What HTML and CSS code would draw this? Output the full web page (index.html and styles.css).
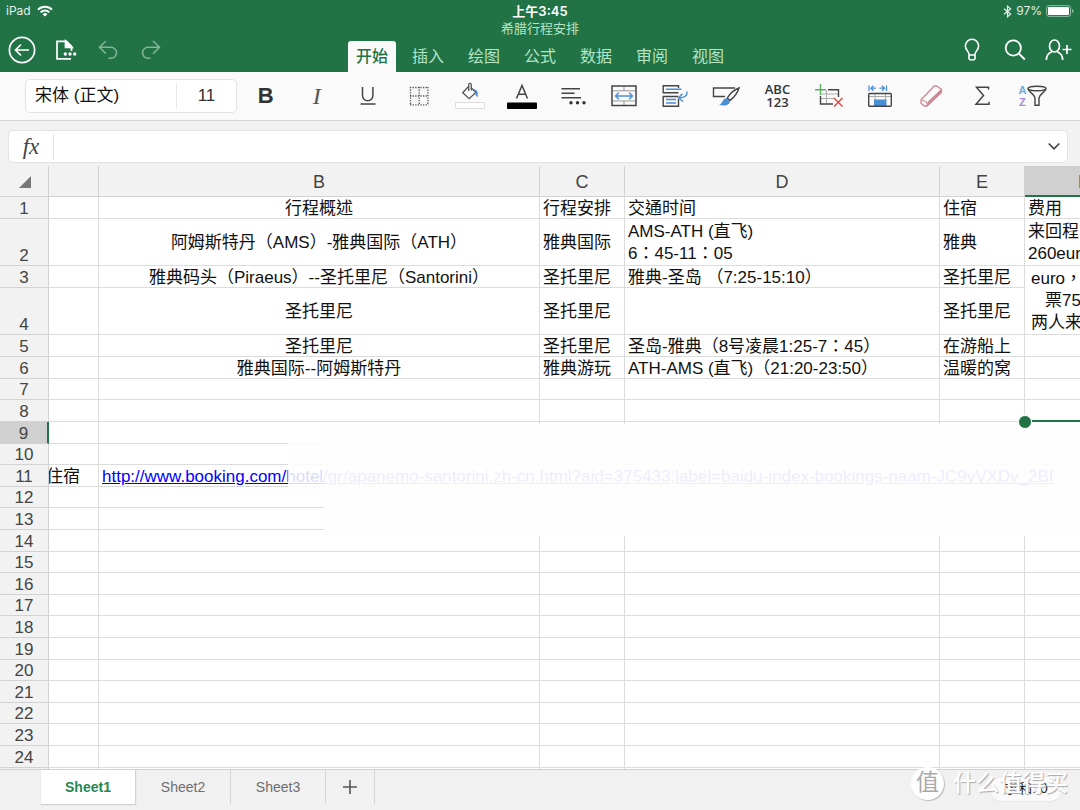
FILE: index.html
```html
<!DOCTYPE html>
<html lang="zh-CN">
<head>
<meta charset="utf-8">
<title>希腊行程安排</title>
<link rel="stylesheet" href="styles.css">
</head>
<body>
<header class="top">
  <div class="status">
    <div class="status-left"><span>iPad</span>
      <svg width="16" height="12" viewBox="0 0 16 12" fill="none" stroke="#fff" stroke-width="2"><path d="M1 4.6a10 10 0 0 1 14 0M3.6 7.4a6.2 6.2 0 0 1 8.800 0"/><path d="M8 11.6 5.6 9.2a3.4 3.4 0 0 1 4.800 0z" fill="#fff" stroke="none"/></svg>
    </div>
    <div class="clock">上午3:45</div>
    <div class="status-right">
      <svg width="9" height="13" viewBox="0 0 9 13" fill="none" stroke="#e4f1e9" stroke-width="1.2"><path d="M1 3.8 7.6 9 4.5 11.8V1.2L7.6 4 1 9.2"/></svg>
      <span>97%</span>
      <svg width="28" height="12" viewBox="0 0 28 12"><rect x=".6" y=".6" width="24" height="10.8" rx="2.4" fill="none" stroke="#8fbda1"/><rect x="2" y="2" width="21" height="8" rx="1" fill="#fff"/><path d="M26 4v4q1.600-.6 1.600-2T26 4z" fill="#8fbda1"/></svg>
    </div>
  </div>
  <div class="bar">
    <div class="bar-left">
      <button class="icon" aria-label="返回"><svg width="28" height="28" viewBox="0 0 28 28" fill="none" stroke="#fff" stroke-width="1.700"><circle cx="14" cy="14" r="12.600"/><path d="M21 14H8M13 8.500 7.500 14l5.500 5.500"/></svg></button>
      <button class="icon" aria-label="文件"><svg width="24" height="24" viewBox="0 0 24 24" fill="none" stroke="#fff" stroke-width="1.700"><path d="M18 20.800H4V3.300h9.500l5 5V13"/><path d="M12.500 3v6.300H19z" fill="#fff"/><g fill="#fff" stroke="none"><circle cx="12.300" cy="16" r="1.700"/><circle cx="17" cy="16" r="1.700"/><circle cx="21.700" cy="16" r="1.700"/></g></svg></button>
      <button class="icon" aria-label="撤消"><svg width="24" height="24" viewBox="0 0 24 24" fill="none" stroke="#84b497" stroke-width="1.500"><path d="M10 3 3.500 9.300l6.500 6.400M3.500 9.300h11.500a5.300 5.300 0 0 1 0 11h-2.500"/></svg></button>
      <button class="icon" aria-label="恢复"><svg width="24" height="24" viewBox="0 0 24 24" fill="none" stroke="#84b497" stroke-width="1.500"><path d="m14 3 6.500 6.300-6.500 6.400M20.500 9.300H9a5.300 5.300 0 0 0 0 11h2.500"/></svg></button>
    </div>
    <div class="bar-center">
      <div class="doc-title">希腊行程安排</div>
      <nav class="tabs">
        <button class="tab active">开始</button><button class="tab">插入</button><button class="tab">绘图</button><button class="tab">公式</button><button class="tab">数据</button><button class="tab">审阅</button><button class="tab">视图</button>
      </nav>
    </div>
    <div class="bar-right">
      <button class="icon" aria-label="操作说明"><svg width="20" height="24" viewBox="0 0 20 24" fill="none" stroke="#fff" stroke-width="1.600"><path d="M7 16.500c0-3-3.600-4.500-3.600-8.600a6.600 6.600 0 0 1 13.200 0c0 4.100-3.600 5.600-3.600 8.600v4.200l-1 1H8l-1-1zM7 17h6"/></svg></button>
      <button class="icon" aria-label="搜索"><svg width="24" height="24" viewBox="0 0 24 24" fill="none" stroke="#fff" stroke-width="1.800"><circle cx="10.300" cy="10" r="7.600"/><path d="m15.800 15.500 6 6"/></svg></button>
      <button class="icon" aria-label="共享"><svg width="28" height="24" viewBox="0 0 28 24" fill="none" stroke="#fff" stroke-width="1.700"><ellipse cx="10.500" cy="8" rx="5" ry="6"/><path d="M2.300 22c0-5 2-7 5.500-8.300M18.700 22c0-5-2-7-5.500-8.300M18.500 11.500h9M23 7v9"/></svg></button>
    </div>
  </div>
</header>

<div class="ribbon">
  <div class="font-box">
    <select class="font-name" aria-label="字体"><option>宋体 (正文)</option></select>
    <input class="font-size" type="text" value="11" aria-label="字号">
  </div>
  <div class="tools">
    <button class="tool bold" aria-label="加粗">B</button>
    <button class="tool italic" aria-label="倾斜">I</button>
    <button class="tool" aria-label="下划线"><svg width="24" height="28" viewBox="0 0 24 28" fill="none" stroke="#444" stroke-width="1.500"><path d="M6.500 5v8.500a5.200 5.200 0 0 0 10.400 0V5M4.500 22h15"/></svg></button>
    <button class="tool" aria-label="边框"><svg width="24" height="24" viewBox="0 0 24 24" fill="none" stroke="#555" stroke-width="1.300" stroke-dasharray="1.300 1.300"><path d="M3 3.500h18.500M3 12h18.500M3 20.800h18.500M3.500 3v18M12.200 3v18M20.900 3v18"/></svg></button>
    <button class="tool" aria-label="填充颜色"><svg width="32" height="32" viewBox="0 0 32 32" fill="none" stroke="#555" stroke-width="1.300"><path d="m14.500 6.500-5.800 6.200 6.500 6 6.600-6.200-4.800-5"/><path d="M14.700 11V5.200q.1-2.200 1.600-1.800 1.200.3 1 2.500v4.500"/><path d="M19 9c4 .2 5.500 3 4.500 8.200-1.500-1-2.400-2.700-2-5z" fill="#4a8fd6" stroke="none"/><rect x="1.500" y="22.500" width="29" height="6" rx=".5" fill="#fff" stroke="#ddd" stroke-width="1"/></svg></button>
    <button class="tool" aria-label="字体颜色"><svg width="32" height="32" viewBox="0 0 32 32" fill="none" stroke="#444" stroke-width="1.500"><path d="M10.500 18.500 16 5.500l5.500 13M12.300 14.200h7.400"/><rect x="1" y="22.500" width="30" height="6.500" rx=".8" fill="#000" stroke="none"/></svg></button>
    <button class="tool" aria-label="对齐"><svg width="28" height="24" viewBox="0 0 28 24" fill="none" stroke="#444" stroke-width="1.400"><path d="M2.500 4.700h18.500M2.500 9.200h13M2.500 13.700h19.500"/><g fill="#333" stroke="none"><circle cx="12" cy="18.700" r="1.700"/><circle cx="18.500" cy="18.700" r="1.700"/><circle cx="25" cy="18.700" r="1.700"/></g></svg></button>
    <button class="tool" aria-label="合并"><svg width="28" height="24" viewBox="0 0 28 24" fill="none" stroke="#444" stroke-width="1.500"><path d="M2 6.800h24M2 17h24M14 2v5M14 17v5" stroke="#999" stroke-width="1"/><rect x="2" y="2" width="24" height="19.500"/><path d="M5.500 12h17M9 8.800 5.500 12 9 15.200M19 8.800l3.500 3.200-3.500 3.200" stroke="#4a8fd6" stroke-width="1.400"/></svg></button>
    <button class="tool" aria-label="自动换行"><svg width="28" height="24" viewBox="0 0 28 24" fill="none" stroke="#444" stroke-width="1.400"><path d="M17.500 8.800H2.200v-7h15.300V4M17.500 15v7.300H2.200v-9.800h15"/><path d="M5 5.300h15.500M5 15.500h10M5 19h10M26 7.500c.5 4-2.500 6.500-8 6.300M21.500 9.800l-4 4 4.500 3.700" stroke="#4a8fd6"/></svg></button>
    <button class="tool" aria-label="格式"><svg width="30" height="24" viewBox="0 0 30 24" fill="none" stroke="#444" stroke-width="1.400"><path d="M24 4H2.500v8.500H14M28 4c-5 2-9.500 6.200-11.700 10l2.600 2.600C22.800 13.500 26.500 9 28 4z"/><path d="M15.500 14.200c-4 0-3.300 5.300-7.500 6.600 5.500 1.800 11 .5 11-4z" fill="#4a8fd6" stroke="none"/></svg></button>
    <button class="tool number" aria-label="数字格式">ABC<br>123</button>
    <button class="tool" aria-label="插入和删除"><svg width="30" height="26" viewBox="0 0 30 26" fill="none" stroke="#444" stroke-width="1.400"><path d="M12.500 7v13M7 11h17M7 15.500h13" stroke="#aaa" stroke-width="1"/><path d="M14 6.800h10.500V14M6.500 13v8H19"/><path d="M1 6.800h11M6.500 1v11" stroke="#5fae62"/><path d="m20 15 8.500 8.500M28.500 15 20 23.500" stroke="#e0483e"/></svg></button>
    <button class="tool" aria-label="单元格大小"><svg width="26" height="26" viewBox="0 0 26 26" fill="none" stroke="#444" stroke-width="1.400"><path d="M2 13.500h22M8 11v12M18.500 11v12" stroke="#aaa" stroke-width="1"/><rect x="7" y="16.500" width="12.500" height="6.500" fill="#4a8fd6" stroke="none"/><rect x="1.700" y="10.500" width="22.600" height="12.800" rx="1"/><path d="M2 2.500V8M19.500 2.500V8M4 5.200h5M12.500 5.200h5M6.500 2.700 4 5.200l2.500 2.500M15 2.700l2.500 2.500L15 7.700" stroke="#4a8fd6" stroke-width="1.300"/></svg></button>
    <button class="tool" aria-label="清除"><svg width="26" height="26" viewBox="0 0 26 26" fill="none" stroke="#cf8796" stroke-width="1.300"><path d="M16.200 3 3 16.700v3.600l3.300 2.700h2.600L23.500 9.300V6.500L18.700 3z"/><path d="m23.300 6.700-13 12.500-1.200 3.500L23.200 9.500z" fill="#cf8796"/><path d="M3.300 16.800l5 2 1.500 4" stroke-width="1"/></svg></button>
    <button class="tool" aria-label="求和"><svg width="20" height="24" viewBox="0 0 20 24" fill="none" stroke="#444" stroke-width="1.500"><path d="M16.500 5.500V3.200H4.500l7 8.300-7.500 8.800h13v-2.600"/></svg></button>
    <button class="tool sort" aria-label="排序和筛选"><span class="az"><span>A</span><span>Z</span></span><svg width="22" height="24" viewBox="0 0 22 24" fill="none" stroke="#444" stroke-width="1.400"><ellipse cx="11" cy="4.500" rx="9" ry="2.300"/><path d="M2 4.800c1 3.500 6.500 5.500 7 9v7.500h4v-7.500c.5-3.500 6-5.500 7-9"/></svg></button>
  </div>
</div>

<div class="formula-row">
  <div class="formula">
    <label class="fx" for="formula">fx</label>
    <input id="formula" class="formula-input" type="text">
    <button class="expand" aria-label="展开"><svg width="14" height="10" viewBox="0 0 14 10" fill="none" stroke="#444" stroke-width="1.700"><path d="m1.700 1.500 5.300 5.300 5.300-5.300"/></svg></button>
  </div>
</div>

<main class="sheet">
  <table class="cells" lang="zh-Hant">
    <colgroup><col class="c-num"><col class="c-a"><col class="c-b"><col class="c-c"><col class="c-d"><col class="c-e"><col class="c-f"></colgroup>
    <thead><tr><th class="corner"><svg width="12" height="12" viewBox="0 0 12 12"><path d="M12 0v12H0z" fill="#777"/></svg></th><th></th><th>B</th><th>C</th><th>D</th><th>E</th><th class="current-col">F</th></tr></thead>
    <tbody>
      <tr><th>1</th><td></td><td class="mid">行程概述</td><td>行程安排</td><td>交通时间</td><td>住宿</td><td>费用</td></tr>
      <tr class="tall"><th>2</th><td></td><td class="mid">阿姆斯特丹（AMS）-雅典国际（ATH）</td><td>雅典国际</td><td>AMS-ATH (直飞)<br>6：45-11：05</td><td>雅典</td><td>来回程<br>260euro</td></tr>
      <tr><th>3</th><td></td><td class="mid">雅典码头（Piraeus）--圣托里尼（Santorini）</td><td>圣托里尼</td><td>雅典-圣岛 （7:25-15:10）</td><td>圣托里尼</td><td class="merged" rowspan="2">euro，<br><span class="inset">票75</span><br>两人来</td></tr>
      <tr class="tall"><th>4</th><td></td><td class="mid">圣托里尼</td><td>圣托里尼</td><td></td><td>圣托里尼</td></tr>
      <tr><th>5</th><td></td><td class="mid">圣托里尼</td><td>圣托里尼</td><td>圣岛-雅典（8号凌晨1:25-7：45）</td><td>在游船上</td><td></td></tr>
      <tr><th>6</th><td></td><td class="mid">雅典国际--阿姆斯特丹</td><td>雅典游玩</td><td>ATH-AMS (直飞)（21:20-23:50）</td><td>温暖的窝</td><td></td></tr>
      <tr><th>7</th><td></td><td></td><td></td><td></td><td></td><td></td></tr>
      <tr><th>8</th><td></td><td></td><td></td><td></td><td></td><td></td></tr>
      <tr><th class="current-row">9</th><td></td><td></td><td></td><td></td><td></td><td class="selected"></td></tr>
      <tr><th>10</th><td></td><td></td><td></td><td></td><td></td><td></td></tr>
      <tr><th>11</th><td class="scrolled">住宿</td><td class="link-cell"><a href="#">http://www.booking.com/hotel/gr/apanemo-santorini.zh-cn.html?aid=375433;label=baidu-index-bookings-naam-JC9vVXDv_2BI</a></td><td></td><td></td><td></td><td></td></tr>
      <tr><th>12</th><td></td><td></td><td></td><td></td><td></td><td></td></tr>
      <tr><th>13</th><td></td><td></td><td></td><td></td><td></td><td></td></tr>
      <tr><th>14</th><td></td><td></td><td></td><td></td><td></td><td></td></tr>
      <tr><th>15</th><td></td><td></td><td></td><td></td><td></td><td></td></tr>
      <tr><th>16</th><td></td><td></td><td></td><td></td><td></td><td></td></tr>
      <tr><th>17</th><td></td><td></td><td></td><td></td><td></td><td></td></tr>
      <tr><th>18</th><td></td><td></td><td></td><td></td><td></td><td></td></tr>
      <tr><th>19</th><td></td><td></td><td></td><td></td><td></td><td></td></tr>
      <tr><th>20</th><td></td><td></td><td></td><td></td><td></td><td></td></tr>
      <tr><th>21</th><td></td><td></td><td></td><td></td><td></td><td></td></tr>
      <tr><th>22</th><td></td><td></td><td></td><td></td><td></td><td></td></tr>
      <tr><th>23</th><td></td><td></td><td></td><td></td><td></td><td></td></tr>
      <tr><th>24</th><td></td><td></td><td></td><td></td><td></td><td></td></tr>
      <tr><th></th><td></td><td></td><td></td><td></td><td></td><td></td></tr>
    </tbody>
  </table>
  <div class="veil veil-small"></div>
  <div class="veil veil-large"></div>
</main>

<footer class="sheet-bar">
  <button class="sheet-tab current">Sheet1</button>
  <button class="sheet-tab">Sheet2</button>
  <button class="sheet-tab">Sheet3</button>
  <button class="add" aria-label="新建工作表"><svg width="16" height="16" viewBox="0 0 16 16" stroke="#555" stroke-width="1.600"><path d="M8 1v14M1 8h14"/></svg></button>
  <div class="sum">求和: 0</div>
  <div class="watermark"><span class="seal">值</span><span class="brand">什么值得买</span></div>
</footer>
</body>
</html>
```

FILE: styles.css
```css
* { box-sizing: border-box; }

body {
  margin: 0;
  height: 100vh;
  display: flex;
  flex-direction: column;
  overflow: hidden;
  background: #f2f2f2;
  color: #111;
  font-family: "Liberation Sans", "Noto Sans CJK SC", sans-serif;
}

button, input, select {
  margin: 0;
  padding: 0;
  border: 0;
  background: none;
  color: inherit;
  font: inherit;
  outline: none;
}

svg { display: block; flex: none; }

/* Title bar */
.top { background: #217346; color: #fff; }

.status {
  display: grid;
  grid-template-columns: 1fr auto 1fr;
  align-items: center;
  height: 20px;
  padding: 2px 6px 0;
  font-family: Inter, "Noto Sans CJK SC", sans-serif;
  font-size: 12px;
  line-height: 18px;
}

.status-left, .status-right { display: flex; align-items: center; gap: 6px; color: #e4f1e9; }
.status-right { justify-content: flex-end; gap: 4px; }
.clock { font-weight: 600; font-size: 13px; }

.bar { display: grid; grid-template-columns: 1fr auto 1fr; height: 52px; }
.bar-left, .bar-right { display: flex; align-items: center; gap: 15px; padding: 8px 8px 0; }
.bar-right { justify-content: flex-end; }
.icon { display: flex; justify-content: center; width: 28px; }
.bar-center { display: flex; flex-direction: column; justify-content: space-between; align-items: center; }
.doc-title { color: #b5e3c3; font-size: 13px; line-height: 18px; }
.tabs { display: flex; gap: 8px; }
.tab { width: 48px; height: 31px; color: #b5e3c3; font-size: 16px; line-height: 30px; border-radius: 3px 3px 0 0; }
.tab.active { background: #fafafa; color: #217346; font-weight: 500; }

/* Ribbon */
.ribbon {
  display: flex;
  align-items: center;
  gap: 3px;
  height: 49px;
  padding: 0 21px 0 25px;
  background: #fafafa;
  border-bottom: 1px solid #d4d4d4;
}

.font-box { display: flex; width: 212px; height: 34px; border: 1px solid #e2e2e2; border-radius: 5px; background: #fff; }
.font-name { flex: 1; appearance: none; padding-left: 9px; font-size: 17px; line-height: 30px; }
.font-size { width: 60px; margin: 3px 0; border-left: 1px solid #e8e8e8; text-align: center; font-size: 17px; color: #333; }
.tools { flex: 1; display: flex; }
.tool { flex: 1; display: flex; justify-content: center; align-items: center; height: 40px; color: #333; }
.bold { font-size: 22px; font-weight: 700; }
.italic { font-family: "Liberation Serif", serif; font-style: italic; font-size: 24px; color: #555; }
.number { font-family: "Open Sans", sans-serif; font-weight: 600; font-size: 13px; line-height: 13px; }
.az { display: flex; flex-direction: column; font-size: 11px; line-height: 12px; font-weight: 700; color: #71a8e0; }
.az span + span { color: #a98ad0; }

/* Formula bar */
.formula-row { padding: 9px 12px 3px 8px; }
.formula { display: flex; align-items: center; height: 33px; border: 1px solid #e2e2e2; border-radius: 5px; background: #fff; }
.fx { width: 45px; border-right: 1px solid #e2e2e2; text-align: center; font: italic 23px/26px "Liberation Serif", serif; color: #444; }
.formula-input { flex: 1; height: 30px; padding: 0 8px; font-size: 17px; }
.expand { padding: 4px 6px; }

/* Grid */
.sheet { position: relative; flex: 1; min-height: 0; overflow: hidden; background: #fff; }

.cells {
  table-layout: fixed;
  width: 1143px;
  border-collapse: separate;
  border-spacing: 0;
  font-family: "Liberation Sans", "Noto Sans CJK TC", sans-serif;
  font-size: 17px;
  line-height: 18px;
  white-space: nowrap;
}

.c-num { width: 49px; }
.c-a { width: 50px; }
.c-b { width: 441px; }
.c-c, .c-e { width: 85px; }
.c-d { width: 315px; }

.cells th, .cells td { padding: 2px 3px 0; border: 0 solid #dcdcdc; border-width: 0 1px 1px 0; }
.cells th { background: #f2f2f2; border-color: #d2d2d2; color: #444; font-weight: 400; vertical-align: bottom; }
.cells td { height: 22px; text-align: left; vertical-align: middle; }
.cells thead th { height: 31px; vertical-align: middle; font-size: 18px; }
.cells tr:nth-child(n+7):nth-child(5n) td, .cells tr:nth-child(n+7):nth-child(5n+2) td { height: 21px; }
.cells .tall td { height: 47px; line-height: 22px; }
.cells .mid { text-align: center; }
.cells .merged { line-height: 22px; padding-left: 6px; }
.inset { padding-left: 14px; }
.cells .corner svg { margin-left: 16px; }
.cells .current-col { background: #d0d0d0; border-bottom: 2px solid #217346; }
.cells .current-row { background: #d0d0d0; border-right: 2px solid #217346; }
.cells .scrolled { overflow: hidden; text-indent: -6px; }
.link-cell a { color: #0000ff; }

.selected { position: relative; }
.selected::before {
  content: "";
  position: absolute;
  z-index: 1;
  left: 7px;
  right: 0;
  top: -2px;
  height: 2px;
  background: #217346;
}
.selected::after {
  content: "";
  position: absolute;
  z-index: 1;
  left: -7px;
  top: -7px;
  width: 12px;
  height: 12px;
  border: 1px solid #fff;
  border-radius: 50%;
  background: #217346;
}

.veil { position: absolute; background: #fefefe; }
.veil-small { left: 288px; width: 36px; top: 275px; height: 57px; opacity: 0.85; }
.veil-large { left: 324px; right: 0; top: 258px; height: 112px; opacity: 0.93; }

/* Sheet tabs */
.sheet-bar { position: relative; display: flex; height: 41px; padding-left: 41px; border-top: 1px solid #d0d0d0; background: #f1f1f1; }
.sheet-tab { width: 95px; height: 34px; border-right: 1px solid #d4d4d4; font-size: 14px; color: #6e6e6e; }
.sheet-tab.current { background: #fff; color: #218a50; font-weight: 700; box-shadow: 0 1px 1px #d0d0d0; }
.add { display: flex; align-items: center; justify-content: center; width: 49px; height: 34px; border-right: 1px solid #d4d4d4; }
.sum { align-self: flex-start; width: 74px; height: 26px; margin: 6px 17px 0 auto; border: 1px solid #e6e6e6; border-radius: 13px; background: #fafafa; text-align: center; font-size: 14px; line-height: 23px; color: #222; }
.watermark { position: absolute; right: 12px; top: -5px; display: flex; align-items: center; gap: 9px; height: 36px; }
.seal { width: 33px; height: 33px; border-radius: 50%; background: #fff; box-shadow: 1px 1px 1px #bbb; text-align: center; font-size: 23px; line-height: 31px; color: #aaa; }
.brand { font-size: 23px; line-height: 32px; font-weight: 500; color: #fff; text-shadow: 1px 1px 1px #aaa; }
```
